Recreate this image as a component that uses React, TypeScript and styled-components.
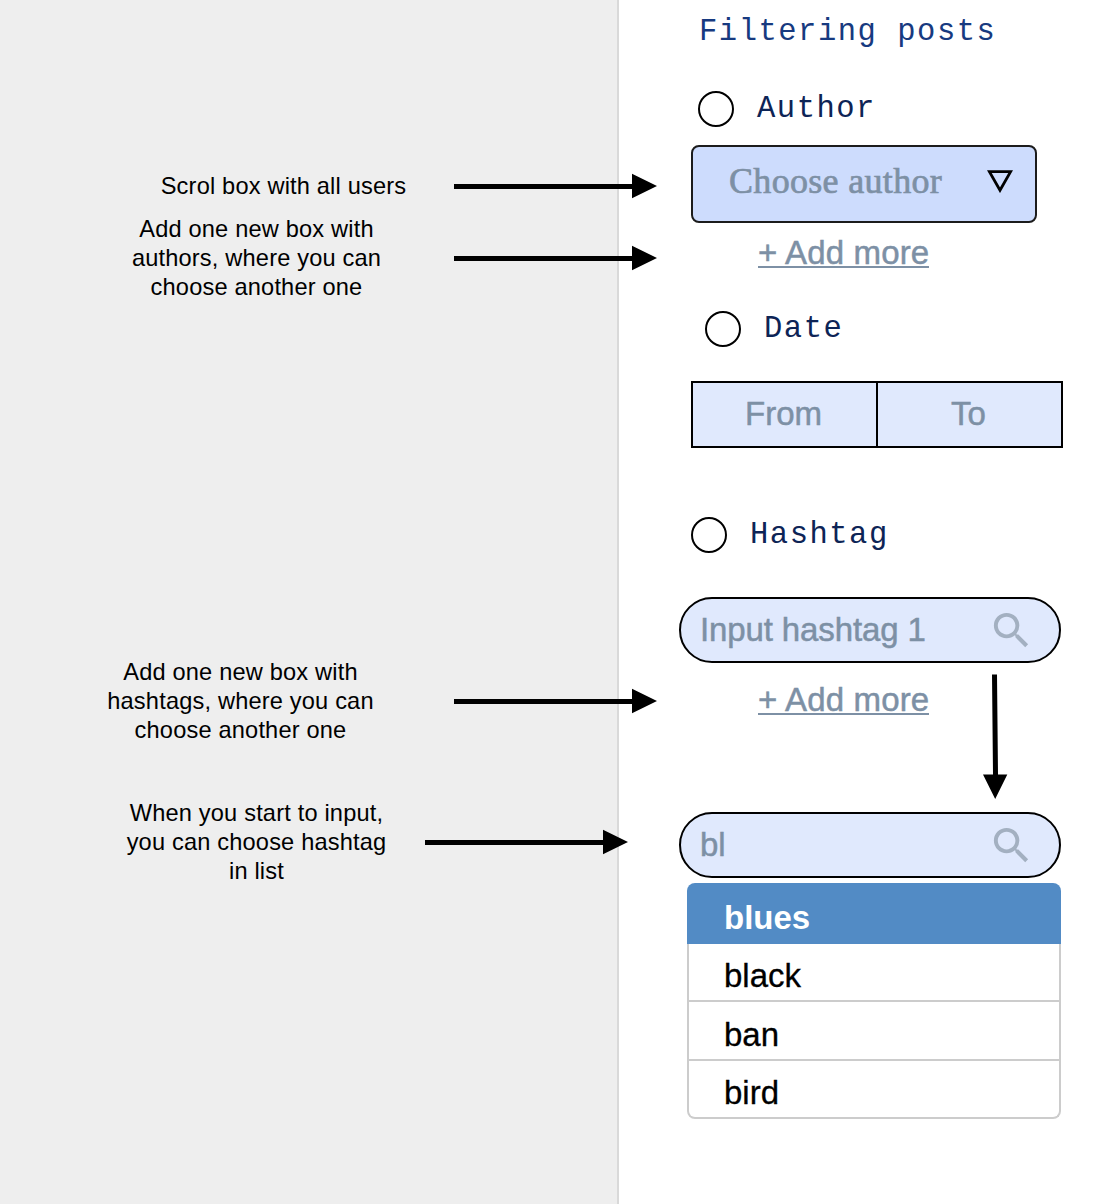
import React from 'react';
import styled, { createGlobalStyle } from 'styled-components';

const sans = `'Liberation Sans', Arial, Helvetica, sans-serif`;
const mono = `'Liberation Mono', 'Courier New', monospace`;
const serif = `Georgia, 'Liberation Serif', serif`;
const muted = '#7d90a5';

const GlobalStyle = createGlobalStyle`
  * { box-sizing: border-box; }
  body { margin: 0; background: #fff; }
`;

const Page = styled.div`
  display: grid;
  grid-template-columns: 619px 1fr;
  width: 1114px;
  height: 1204px;
  overflow: hidden;
  background: #fff;
  font-family: ${sans};
`;

const Notes = styled.aside`
  position: relative;
  z-index: 1;
  display: flex;
  flex-direction: column;
  background: #eee;
  border-right: 2px solid #d9d9d9;
`;

const NoteRow = styled.div<{ $top: number; $left: number; $width: number; $gap: number }>`
  display: grid;
  grid-template-columns: ${p => p.$width}px 203px;
  column-gap: ${p => p.$gap}px;
  align-items: center;
  margin-top: ${p => p.$top}px;
  margin-left: ${p => p.$left}px;
`;

const NoteText = styled.p`
  margin: 0;
  color: #000;
  font-size: 23.6px;
  line-height: 29px;
  letter-spacing: 0.18px;
  text-align: center;
  white-space: pre;
`;

const ArrowSvg = styled.svg`
  display: block;
  overflow: visible;
`;

const Panel = styled.main`
  display: flex;
  flex-direction: column;
  align-items: flex-start;
`;

const Title = styled.h1`
  margin: 14px 0 0 80px;
  color: #173a80;
  font: 400 30.5px/36px ${mono};
  letter-spacing: 1.52px;
  white-space: pre;
`;

const Option = styled.label<{ $top: number; $left: number }>`
  display: flex;
  align-items: center;
  gap: 23px;
  height: 36px;
  margin-top: ${p => p.$top}px;
  margin-left: ${p => p.$left}px;
`;

const Radio = styled.span`
  width: 36px;
  height: 36px;
  border: 2.4px solid #000;
  border-radius: 50%;
`;

const OptionLabel = styled.span`
  color: #0d2456;
  font: 400 30.5px/36px ${mono};
  letter-spacing: 1.52px;
`;

const Select = styled.div`
  display: flex;
  align-items: center;
  justify-content: space-between;
  width: 346px;
  height: 78px;
  margin: 18px 0 0 72px;
  padding: 0 22px 6px 36px;
  border: 2px solid #1c1c1c;
  border-radius: 8px;
  background: #cddcfd;
  color: ${muted};
  font: 400 36px/40px ${serif};
  letter-spacing: 0.32px;
  -webkit-text-stroke: 0.7px ${muted};
`;

const AddMore = styled.a<{ $top: number }>`
  margin-top: ${p => p.$top}px;
  margin-left: 139px;
  color: ${muted};
  font-size: 33px;
  line-height: 37px;
  letter-spacing: 0.17px;
  white-space: nowrap;
  border-bottom: 2px solid ${muted};
  height: 34px;
  -webkit-text-stroke: 0.5px ${muted};
`;

const DateRange = styled.div`
  display: grid;
  grid-template-columns: 1fr 2px 1fr;
  width: 372px;
  height: 67px;
  margin: 34px 0 0 72px;
  border: 2px solid #000;
  background: #e0e9fd;
`;

const DateField = styled.div`
  display: flex;
  align-items: center;
  justify-content: center;
  padding: 0 2px 2px 0;
  color: ${muted};
  font-size: 33px;
  -webkit-text-stroke: 0.5px ${muted};
`;

const Divider = styled.div`
  background: #000;
`;

const SearchField = styled.div<{ $top: number }>`
  display: flex;
  align-items: center;
  justify-content: space-between;
  width: 382px;
  height: 66px;
  margin-top: ${p => p.$top}px;
  margin-left: 60px;
  padding: 0 24px 0 19px;
  border: 2.4px solid #000;
  border-radius: 33px;
  background: #e0e9fd;
  color: ${muted};
  font-size: 33px;
  letter-spacing: -0.12px;
  -webkit-text-stroke: 0.5px ${muted};
`;

const Between = styled.div`
  display: flex;
  align-items: flex-start;
  width: 100%;
  height: 149px;
`;

const DownArrow = styled.svg`
  display: block;
  margin: 11px 0 0 53px;
`;

const List = styled.ul`
  width: 374px;
  margin: 5px 0 0 68px;
  padding: 0;
  list-style: none;
`;

const Item = styled.li<{ $active?: boolean }>`
  display: flex;
  align-items: center;
  height: ${p => (p.$active ? 61 : 58.4)}px;
  padding: ${p => (p.$active ? '8px 0 0 37px' : '8px 0 0 35px')};
  background: ${p => (p.$active ? '#528bc5' : '#fff')};
  color: ${p => (p.$active ? '#fff' : '#000')};
  font-size: 33px;
  font-weight: ${p => (p.$active ? 700 : 400)};
  border: ${p => (p.$active ? '0' : '2px solid #ccc')};
  border-top: 0;
  -webkit-text-stroke: ${p => (p.$active ? '0' : '0.3px #000')};

  &:first-child { border-radius: 8px 8px 0 0; }
  &:last-child { border-radius: 0 0 8px 8px; }
`;

const Arrow = () => (
  <ArrowSvg width="203" height="25" viewBox="0 0 203 25">
    <path d="M0 10h178V-0.3L203 12 178 24.3V15H0z" fill="#000" />
  </ArrowSvg>
);

const SearchIcon = () => (
  <svg width="47" height="47" viewBox="0 0 24 24">
    <path
      fill="#a3b0c1"
      stroke="none"
      d="M15.5 14h-.79l-.28-.27A6.471 6.471 0 0 0 16 9.5 6.5 6.5 0 1 0 9.5 16c1.61 0 3.09-.59 4.23-1.57l.27.28v.79l5 4.99L20.49 19l-4.99-5zm-6 0C7.01 14 5 11.99 5 9.5S7.01 5 9.5 5 14 7.01 14 9.5 11.99 14 9.5 14z"
    />
  </svg>
);

const notes = [
  { top: 172, left: 153, width: 261, gap: 40, text: 'Scrol box with all users' },
  { top: 14, left: 116, width: 281, gap: 57, text: 'Add one new box with\nauthors, where you can\nchoose another one' },
  { top: 356, left: 100, width: 281, gap: 73, text: 'Add one new box with\nhashtags, where you can\nchoose another one' },
  { top: 54, left: 116, width: 281, gap: 28, text: 'When you start to input,\nyou can choose hashtag\nin list' },
];

const suggestions = ['blues', 'black', 'ban', 'bird'];

export default function App() {
  return (
    <>
      <GlobalStyle />
      <Page>
        <Notes>
          {notes.map(n => (
            <NoteRow key={n.top} $top={n.top} $left={n.left} $width={n.width} $gap={n.gap}>
              <NoteText>{n.text}</NoteText>
              <Arrow />
            </NoteRow>
          ))}
        </Notes>
        <Panel>
          <Title>Filtering posts</Title>
          <Option $top={41} $left={79}>
            <Radio />
            <OptionLabel>Author</OptionLabel>
          </Option>
          <Select>
            <span>Choose author</span>
            <svg width="26" height="24" viewBox="0 0 26 24">
              <path d="M2.4 2.7h21.2L13 21.3z" fill="none" stroke="#000" strokeWidth="2.8" />
            </svg>
          </Select>
          <AddMore $top={11}>+ Add more</AddMore>
          <Option $top={43} $left={86}>
            <Radio />
            <OptionLabel>Date</OptionLabel>
          </Option>
          <DateRange>
            <DateField>From</DateField>
            <Divider />
            <DateField>To</DateField>
          </DateRange>
          <Option $top={69} $left={72}>
            <Radio />
            <OptionLabel>Hashtag</OptionLabel>
          </Option>
          <SearchField $top={44}>
            <span>Input hashtag 1</span>
            <SearchIcon />
          </SearchField>
          <Between>
            <AddMore $top={18}>+ Add more</AddMore>
            <DownArrow width="26" height="126" viewBox="0 0 26 126">
              <path d="M10 0.5h5L16 100.5H25.3L13.2 125 1 100.5H11z" fill="#000" />
            </DownArrow>
          </Between>
          <SearchField $top={0}>
            <span>bl</span>
            <SearchIcon />
          </SearchField>
          <List>
            {suggestions.map((s, i) => (
              <Item key={s} $active={i === 0}>{s}</Item>
            ))}
          </List>
        </Panel>
      </Page>
    </>
  );
}
